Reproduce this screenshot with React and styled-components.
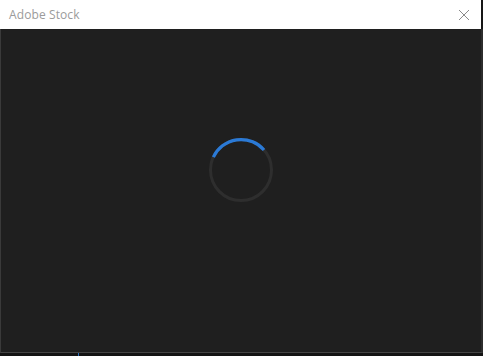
import styled, { createGlobalStyle } from "styled-components"

const GlobalStyle = createGlobalStyle`
    html, body {
        margin: 0;
        padding: 0;
        background: #161616;
    }
`

const Window = styled.div`
    width: 483px;
    height: 356px;
    display: flex;
    flex-direction: column;
    box-sizing: border-box;
    background: #161616;
    font-family: "Open Sans", "Noto Sans", sans-serif;
`
const TitleBar = styled.div`
    height: 29px;
    flex-shrink: 0;
    display: flex;
    align-items: center;
    justify-content: space-between;
    padding: 0 10px 0 9px;
    background: #ffffff;
    margin-right: 2px;
`
const Title = styled.span`
    font-size: 12px;
    color: #9b9b9b;
    letter-spacing: 0.1px;
`
const CloseButton = styled.button`
    border: none;
    background: transparent;
    padding: 0;
    width: 14px;
    height: 14px;
    display: flex;
    align-items: center;
    justify-content: center;
    cursor: pointer;
`
const Body = styled.div`
    flex: 1;
    display: flex;
    align-items: flex-start;
    justify-content: center;
    background: #1f1f1f;
    border-left: 1px solid #3a3a3a;
    border-right: 2px solid #2c2c2c;
    border-bottom: 1px solid #444444;
    padding-top: 108px;
`
const Footer = styled.div`
    height: 3px;
    flex-shrink: 0;
    background: #141414;
    display: flex;
    padding-left: 78px;
`
const Tick = styled.div`
    width: 1px;
    height: 3px;
    background: #2d6fb8;
`

const Spinner = () => (
    <svg width="66" height="66" viewBox="0 0 66 66">
        <circle cx="33" cy="33" r="30.5" fill="none" stroke="#2e2e2e" strokeWidth="3" />
        <path
            d="M 5.4 20.1 A 30.5 30.5 0 0 1 56.0 13.0"
            fill="none"
            stroke="#2b7ad6"
            strokeWidth="3.2"
        />
    </svg>
)

const App = () => {
    return (
        <Window>
            <GlobalStyle />
            <TitleBar>
                <Title>Adobe Stock</Title>
                <CloseButton>
                    <svg width="12" height="12" viewBox="0 0 12 12">
                        <path d="M1 1 L11 11 M11 1 L1 11" stroke="#8a8a8a" strokeWidth="1" />
                    </svg>
                </CloseButton>
            </TitleBar>
            <Body>
                <Spinner />
            </Body>
            <Footer>
                <Tick />
            </Footer>
        </Window>
    )
}

export default App
